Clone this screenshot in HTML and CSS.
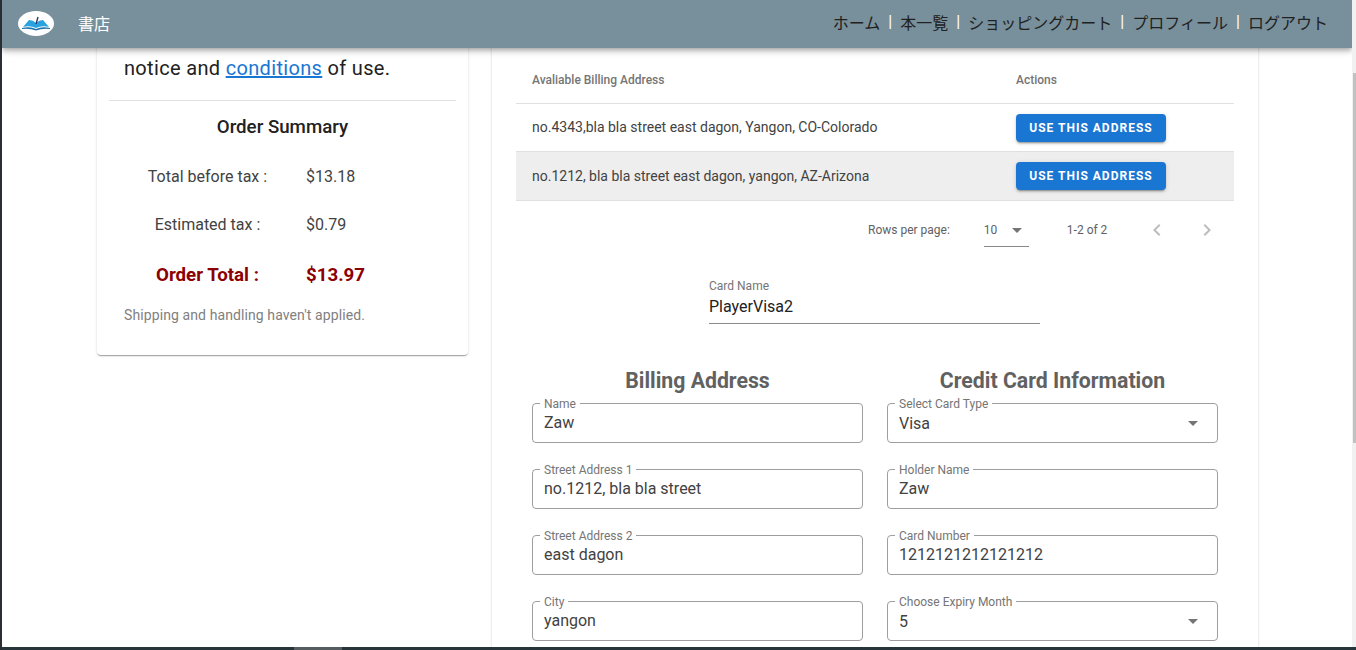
FILE: index.html
```html
<!DOCTYPE html>
<html lang="ja">
<head>
    <meta charset="UTF-8">
    <title>書店</title>
    <link rel="stylesheet" href="styles.css">
</head>
<body>
    <div class="app">
        <div class="window">
            <header class="topbar">
                <div class="brand">
                    <span class="logo">
                        <svg width="36" height="25" viewBox="0 0 36 25">
                            <ellipse cx="18" cy="12.5" rx="18" ry="12.5" fill="#fff"/>
                            <path d="M5 16 L11 9 Q15 9 18 12 Q21 9 25 9 L31 16 Q24 14 18 17 Q12 14 5 16 Z" fill="#29a3e0"/>
                            <path d="M4 17 Q12 15 18 18 Q24 15 32 17 L32 18 Q24 17 18 19.5 Q12 17 4 18 Z" fill="#1b6fa8"/>
                            <path d="M18 13 L20 6" stroke="#343862" stroke-width="1.4"/>
                        </svg>
                    </span>
                    <span class="brand-name">書店</span>
                </div>
                <nav class="nav">
                    <a>ホーム</a><i>|</i><a>本一覧</a><i>|</i><a>ショッピングカート</a><i>|</i><a>プロフィール</a><i>|</i><a>ログアウト</a>
                </nav>
            </header>

            <div class="page">
                <aside class="summary-col">
                    <div class="card summary">
                        <p class="notice">notice and <a href="#">conditions</a> of use.</p>
                        <hr class="rule">
                        <h3>Order Summary</h3>
                        <div class="sum-row"><span>Total before tax :</span><span>$13.18</span></div>
                        <div class="sum-row"><span>Estimated tax :</span><span>$0.79</span></div>
                        <div class="sum-row total"><span>Order Total :</span><span>$13.97</span></div>
                        <p class="hint">Shipping and handling haven't applied.</p>
                    </div>
                </aside>

                <main class="card main">
                    <table class="addresses">
                        <thead>
                            <tr><th>Avaliable Billing Address</th><th>Actions</th></tr>
                        </thead>
                        <tbody>
                            <tr>
                                <td>no.4343,bla bla street east dagon, Yangon, CO-Colorado</td>
                                <td><button class="btn">USE THIS ADDRESS</button></td>
                            </tr>
                            <tr class="selected">
                                <td>no.1212, bla bla street east dagon, yangon, AZ-Arizona</td>
                                <td><button class="btn">USE THIS ADDRESS</button></td>
                            </tr>
                        </tbody>
                    </table>

                    <div class="pager">
                        <span class="pager-label">Rows per page:</span>
                        <span class="pager-select">10<b class="caret"></b></span>
                        <span class="pager-count">1-2 of 2</span>
                        <svg class="chev" width="24" height="24" viewBox="0 0 24 24"><path d="M15.41 7.41L14 6l-6 6 6 6 1.41-1.41L10.83 12z"/></svg>
                        <svg class="chev" width="24" height="24" viewBox="0 0 24 24"><path d="M10 6L8.59 7.41 13.17 12l-4.58 4.59L10 18l6-6z"/></svg>
                    </div>

                    <div class="card-name">
                        <label>Card Name</label>
                        <div class="card-name-value">PlayerVisa2</div>
                    </div>

                    <div class="columns">
                        <section class="column">
                            <h2>Billing Address</h2>
                            <div class="field"><span class="legend">Name</span>Zaw</div>
                            <div class="field"><span class="legend">Street Address 1</span>no.1212, bla bla street</div>
                            <div class="field"><span class="legend">Street Address 2</span>east dagon</div>
                            <div class="field"><span class="legend">City</span>yangon</div>
                        </section>
                        <section class="column">
                            <h2>Credit Card Information</h2>
                            <div class="field select"><span class="legend">Select Card Type</span>Visa<b class="caret"></b></div>
                            <div class="field"><span class="legend">Holder Name</span>Zaw</div>
                            <div class="field"><span class="legend">Card Number</span>1212121212121212</div>
                            <div class="field select"><span class="legend">Choose Expiry Month</span>5<b class="caret"></b></div>
                        </section>
                    </div>
                </main>
            </div>
        </div>
        <div class="scrollbar"><span></span></div>
    </div>
    <div class="taskbar"><span></span></div>
</body>
</html>
```

FILE: styles.css
```css
html, body {
    height: 100%;
    margin: 0;
    overflow: hidden;
}
body {
    font-family: Roboto, "Noto Sans CJK JP", sans-serif;
    color: #212121;
    background: #fff;
    border-left: 2px solid #2b2f33;
    display: flex;
    flex-direction: column;
    box-sizing: border-box;
}
.app {
    flex: 1;
    min-height: 0;
    display: flex;
}
.window {
    flex: 1;
    min-width: 0;
    overflow: hidden;
}
.taskbar {
    height: 3px;
    background: #27343a;
    margin-left: -2px;
    padding-left: 294px;
}
.taskbar span {
    display: block;
    width: 48px;
    height: 3px;
    background: #555d61;
}
.scrollbar {
    width: 4px;
    background: #f1f1f1;
}
.scrollbar span {
    display: block;
    height: 370px;
    margin: 73px 0 0 1px;
    background: #c1c1c1;
}
.topbar {
    height: 48px;
    background: #78909c;
    box-shadow: 0 2px 4px -1px rgba(0,0,0,.2), 0 4px 5px rgba(0,0,0,.14), 0 1px 10px rgba(0,0,0,.12);
    display: flex;
    justify-content: space-between;
    align-items: center;
    padding: 0 24px 2px 16px;
    box-sizing: border-box;
    position: relative;
    z-index: 2;
}
.brand {
    display: flex;
    align-items: center;
    gap: 24px;
}
.logo {
    display: flex;
}
.brand-name {
    color: #fff;
    font-size: 16px;
}
.nav {
    font-size: 16px;
    color: #212121;
    display: flex;
    align-items: center;
    padding-bottom: 3px;
}
.nav i {
    font-style: normal;
    color: #fff;
    width: 20px;
    text-align: center;
}
.page {
    display: flex;
    align-items: flex-start;
    padding-left: 95px;
    gap: 24px;
    margin-top: -40px;
}
.card {
    background: #fff;
    border-radius: 4px;
    box-shadow: 0 2px 1px -1px rgba(0,0,0,.2), 0 1px 1px rgba(0,0,0,.14), 0 1px 3px rgba(0,0,0,.12);
}
.summary-col {
    width: 371px;
    flex: none;
}
.summary {
    padding: 44px 12px 28px;
}
.notice {
    margin: 0;
    font-size: 20px;
    letter-spacing: .33px;
    line-height: 32px;
    padding: 0 15px;
}
.notice a {
    color: #1976d2;
}
.rule {
    border: 0;
    border-top: 1px solid #e0e0e0;
    margin: 16px 0 0;
}
.summary h3 {
    font-size: 18.72px;
    font-weight: 500;
    text-align: center;
    line-height: 24px;
    margin: 14px 0 26px;
}
.sum-row {
    display: grid;
    grid-template-columns: 197px auto;
    font-size: 16px;
    color: #424242;
    line-height: 24px;
    margin-top: 24px;
}
.sum-row span:first-child {
    text-align: center;
}
.sum-row.total {
    font-size: 18.72px;
    font-weight: 700;
    color: #8b0000;
    margin-top: 26px;
}
.hint {
    margin: 16px 15px 0;
    font-size: 14px;
    letter-spacing: .1px;
    line-height: 24px;
    color: #808080;
}
.main {
    width: 766px;
    padding: 48px 24px 0;
    box-sizing: border-box;
    height: 660px;
    border-radius: 0;
}
.addresses {
    width: 100%;
    border-collapse: collapse;
    font-size: 14px;
    table-layout: fixed;
}
.addresses th {
    text-align: left;
    font-size: 12px;
    font-weight: 500;
    color: #757575;
    height: 47px;
    padding: 1px 16px 0;
    box-sizing: border-box;
    border-bottom: 1px solid #e0e0e0;
}
.addresses th:first-child {
    width: 484px;
}
.addresses td {
    height: 48px;
    padding: 0 16px;
    box-sizing: border-box;
    color: #424242;
    border-bottom: 1px solid #e0e0e0;
}
.addresses .selected td {
    height: 49px;
    background: #eee;
}
.btn {
    display: block;
    background: #1976d2;
    color: #fff;
    border: 0;
    border-radius: 4px;
    height: 28px;
    width: 150px;
    font-family: inherit;
    font-size: 12px;
    font-weight: 700;
    letter-spacing: 1px;
    box-shadow: 0 3px 1px -2px rgba(0,0,0,.2), 0 2px 2px rgba(0,0,0,.14), 0 1px 5px rgba(0,0,0,.12);
}
tbody tr:first-child .btn {
    margin-top: 1px;
}
.pager {
    display: flex;
    align-items: center;
    height: 58px;
    font-size: 12px;
    color: #616161;
    padding-left: 352px;
    white-space: nowrap;
}
.pager > * {
    flex: none;
}
.pager-select {
    margin-left: 34px;
    width: 45px;
    height: 32px;
    line-height: 32px;
    border-bottom: 1px solid #888;
    position: relative;
    margin-top: 1px;
}
.pager-select .caret {
    right: 7px;
}
.pager-count {
    margin-left: 38px;
    margin-right: 38px;
}
.chev {
    fill: #bdbdbd;
}
.chev + .chev {
    margin-left: 26px;
}
.caret {
    position: absolute;
    right: 19px;
    top: 50%;
    margin-top: -2px;
    border: 5px solid transparent;
    border-top-color: #757575;
    border-bottom: 0;
}
.card-name {
    width: 331px;
    margin: 20px 0 0 193px;
    border-bottom: 1px solid #8a8a8a;
}
.card-name label {
    display: block;
    font-size: 12px;
    line-height: 14px;
    color: #757575;
}
.card-name-value {
    font-size: 16px;
    line-height: 24px;
    padding: 2px 0 4px;
}
.columns {
    display: grid;
    grid-template-columns: 331px 331px;
    justify-content: space-between;
    padding: 0 16px;
    margin-top: 43px;
}
.column h2 {
    font-size: 21.28px;
    font-weight: 700;
    color: #616161;
    text-align: center;
    line-height: 28px;
    margin: 0 0 8px;
}
.field {
    position: relative;
    height: 40px;
    border: 1px solid #9e9e9e;
    border-radius: 4px;
    box-sizing: border-box;
    padding: 0 11px;
    line-height: 37px;
    font-size: 16px;
    color: #424242;
    margin-bottom: 26px;
}
.field.select {
    line-height: 39px;
}
.legend {
    position: absolute;
    left: 7px;
    top: -6px;
    padding: 0 4px;
    background: #fff;
    font-size: 12px;
    line-height: 12px;
    color: #757575;
}
```
